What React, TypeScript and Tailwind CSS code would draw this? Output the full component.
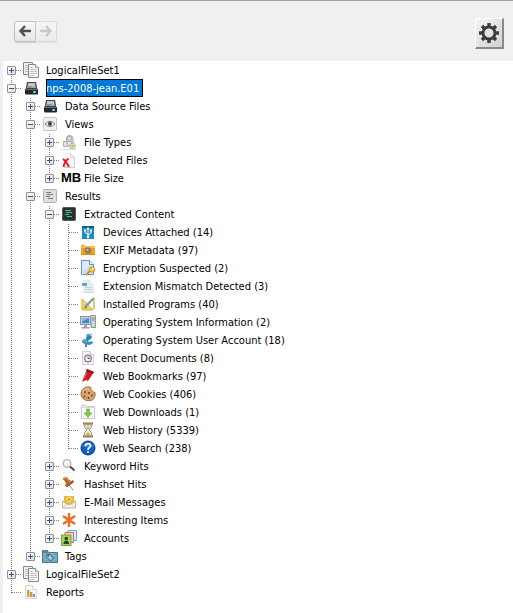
import { useState, type ReactNode } from "react";

type TreeNode = { id: string; label: string; icon: keyof typeof glyphs; children?: TreeNode[]; expandable?: boolean };

const drive = (
  <>
    <path d="M4 2h9l1.500 8h-12z" fill="#3f4245" />
    <path d="M5 3h7l1 5H4z" fill="#a4a8ab" />
    <path d="M5.500 3h6l.5 3H5z" fill="#c6c9cb" />
    <path d="M5 7h4" stroke="#7c8083" />
    <path d="M2 9h13v4.500q0 1-1 1H3q-1 0-1-1z" fill="#25282b" />
    <path d="M2.500 9.500h12" stroke="#6a6e72" />
    <path d="M10 11h3v2h-3z" fill="#2fc3cc" />
    <path d="M11 11.500h1v1h-1z" fill="#b8f5f5" />
  </>
);

const glyphs = {
  fileset: (
    <>
      <path d="M.5.5h9v12H.5z" fill="#f0f0f0" stroke="#868686" />
      <path d="M2 3.500h3M2 5.500h3M2 7.500h3M2 9.500h3" stroke="#bdbdbd" />
      <path d="M5.500 2.500h7l3 3v10h-10z" fill="#f4f4f4" stroke="#868686" />
      <path d="M12.500 2.500v3h3" fill="#fff" stroke="#9a9a9a" />
      <path d="M7 5.500h3M7 7.500h7M7 9.500h7M7 11.500h7M7 13.500h4" stroke="#c4c4c4" />
    </>
  ),
  drive,
  views: (
    <>
      <rect x="1.500" y="1.500" width="13" height="13" rx="1" fill="#f1f1f1" stroke="#c4c4c4" />
      <path d="M3 8q5-5.500 10 0q-5 5-10 0z" fill="#fff" stroke="#777" />
      <circle cx="8" cy="7.800" r="2.200" fill="#52707c" />
      <circle cx="8" cy="7.800" r="1" fill="#111" />
    </>
  ),
  types: (
    <>
      <path d="M2.500 7.500h5v5h-5z" fill="#e4e4e4" stroke="#b0b0b0" />
      <path d="M5.500 9V4q0-2.500 3-2.500T12 4v5z" fill="#e9ebeb" stroke="#aaa" />
      <circle cx="8.500" cy="4.500" r="2.200" fill="#d3e2da" stroke="#a3aaa6" />
      <path d="M6.500 7.500h4v4h-4z" fill="#eee" stroke="#b5b5b5" />
      <circle cx="11.500" cy="12" r="2.800" fill="#e2ecd6" stroke="#a5b596" />
      <circle cx="11.500" cy="12" r="1.200" fill="#8fbf5c" />
      <path d="M0 15.500h15" stroke="#ddd" />
    </>
  ),
  deleted: (
    <>
      <path d="M2 1h8l4 4v11H2z" fill="#f6f6f6" />
      <path d="M13.500 5v10.500H3" fill="none" stroke="#d0d0d0" />
      <path d="M9.500 1.500l4 4h-4z" fill="#fff" stroke="#d6d6d6" />
      <path d="M2 7q3 2 6 8M7.500 6.500q-4 3-5 8.500" fill="none" stroke="#ef1515" strokeWidth="1.900" />
    </>
  ),
  size: null,
  results: (
    <>
      <rect x="1.500" y="1.500" width="13" height="13" rx="1" fill="#dedede" stroke="#b0b0b0" />
      <path d="M4 4.500h5M5 6.500h6M4 8.500h4M6 10.500h5" stroke="#777" />
    </>
  ),
  extracted: (
    <>
      <rect x="1.500" y="1.500" width="13" height="13" rx="1" fill="#2c302f" stroke="#555" />
      <path d="M4 4.500h6M5 6.500h6M4 8.500h4M6 10.500h5" stroke="#35c98d" />
    </>
  ),
  usb: (
    <>
      <rect x="2" y="2" width="12" height="13" fill="#218ac4" />
      <path d="M2 2h12v2H2z" fill="#0d5f96" />
      <path d="M8 4v9M8 10.500L5 8.500V6.500M8 11l3-2V7" fill="none" stroke="#fff" />
      <path d="M6.500 5.500L8 3l1.500 2.500z" fill="#fff" />
      <path d="M4 5.500h2v2H4zM10 5.500h2v2h-2z" fill="#fff" />
      <circle cx="8" cy="13" r="1.300" fill="#fff" />
    </>
  ),
  camera: (
    <>
      <path d="M1 3h3l1 1h10v9H1z" fill="#f29f1e" />
      <path d="M1 4h14v2H1z" fill="#ffba42" />
      <path d="M1 12.500h14" stroke="#dc8a12" />
      <circle cx="8" cy="8.500" r="3.300" fill="#b9793a" />
      <circle cx="8" cy="8.500" r="2.300" fill="#5d8498" />
      <circle cx="7.500" cy="8" r="1" fill="#b4d3e2" />
    </>
  ),
  encrypted: (
    <>
      <path d="M1.500.500h8l4 4v10h-12z" fill="#dcebfa" stroke="#5991d5" />
      <path d="M9.500.500v4h4" fill="#fff" stroke="#5991d5" />
      <path d="M3 10.500q4-1 7-5v5l-3 3H3z" fill="#c3dcf5" />
      <path d="M10.500 10.500L6 15" stroke="#d39722" strokeWidth="2.200" />
      <circle cx="12" cy="9.500" r="2.700" fill="#f6ca55" stroke="#c88c22" />
      <circle cx="12.800" cy="8.700" r=".8" fill="#fff" />
    </>
  ),
  mismatch: (
    <>
      <path d="M3 2h7l4 4v8H3z" fill="#eaeef0" />
      <path d="M10 2v4h4" fill="#fff" stroke="#d3dadf" strokeWidth=".7" />
      <path d="M2 5h5v3H2z" fill="#6ba3cc" />
      <path d="M5 9.500h7M5 11.500h7" stroke="#c9d0d4" />
      <path d="M3.500 14.500H14" stroke="#d5d9db" />
    </>
  ),
  programs: (
    <>
      <path d="M2 3v11h11z" fill="#f4dc58" stroke="#cfb237" />
      <path d="M4.500 8.500v3.500H8z" fill="#fff" stroke="#cfb237" strokeWidth=".7" />
      <path d="M14 2L5.500 10.500" stroke="#7d97a8" strokeWidth="2.200" />
      <path d="M14 2.500v11" stroke="#d0b43a" strokeWidth="1.400" />
      <path d="M5.500 10L4 12.500 7 11.500z" fill="#426a83" />
    </>
  ),
  computer: (
    <>
      <rect x=".5" y="2.500" width="10" height="8" fill="#c9ced2" stroke="#8f979e" />
      <path d="M2 4h7v5H2z" fill="#3388d1" />
      <path d="M2 4h7L2 8z" fill="#7dbaf0" />
      <path d="M4 11h3v2H4zM1.500 13h8v1.500h-8z" fill="#9aa3ab" />
      <rect x="11" y="1.500" width="4.500" height="12" fill="#d3d7da" stroke="#949ca3" />
      <path d="M12 4h3M12 6h3" stroke="#76858e" />
      <path d="M12 13h3v1h-3z" fill="#6ab04c" />
    </>
  ),
  account: (
    <>
      <circle cx="8.500" cy="4" r="2.300" fill="#559fc8" />
      <path d="M6 5.500l5-2 1 2-2.500 2.500-3 1.500z" fill="#337fac" />
      <path d="M10 2l2-.500v2z" fill="#6fb4d9" />
      <path d="M2 8l3-1 2 1 2 2 3-1 1 2-3 2-3-.5V15H5v-3L2.500 11z" fill="#3d8dbb" />
      <path d="M3 8.500l3 .5 1 2" fill="none" stroke="#7dbbdb" />
    </>
  ),
  recent: (
    <>
      <path d="M2.500 1.500h8l3 3v10h-11z" fill="#f6f6f6" stroke="#cfcfcf" />
      <path d="M10.500 1.500v3h3" fill="#fff" stroke="#ccc" />
      <circle cx="8" cy="8.500" r="3.300" fill="#f4eef5" stroke="#8b7590" strokeWidth="1.300" />
      <path d="M8 6.500v2h2" fill="none" stroke="#715079" />
    </>
  ),
  bookmark: (
    <>
      <path d="M7 1l7 3-6 9-2-1-4 2z" fill="#c52028" />
      <path d="M7 1l7 3-1.500 2L6 3z" fill="#98161c" />
      <path d="M6.500 5L3.500 11" stroke="#e8585d" strokeWidth="1.200" />
    </>
  ),
  cookie: (
    <>
      <path d="M5 1.500q3-1.500 6 0q-1 2 1 3q1 2 3 2q1 6-4 8q-6 1-9-3Q-1 5 5 1.500z" fill="#d6a56c" stroke="#a5743f" />
      <path d="M5 3q2-1 4 0M3 6q1-2 2-2" stroke="#edc78d" fill="none" />
      <g fill="#6d4826">
        <circle cx="5" cy="6" r="1" />
        <circle cx="9" cy="7" r="1" />
        <circle cx="4.500" cy="10.500" r="1" />
        <circle cx="8.500" cy="12" r="1" />
        <circle cx="12" cy="9.500" r="1" />
      </g>
    </>
  ),
  download: (
    <>
      <path d="M1.500 1.500h5l1 1h7v12h-13z" fill="#f7f7f7" stroke="#c4caca" />
      <path d="M2 3.500h12" stroke="#d2d8d8" />
      <path d="M6.500 5h3v4H12l-4 4.500L4 9h2.500z" fill="#86c441" stroke="#67a832" strokeWidth=".6" />
    </>
  ),
  history: (
    <>
      <path d="M4 3q0 3 3 5-3 2-3 6h8q0-4-3-6 3-2 3-5z" fill="#f4f0df" stroke="#a29b85" />
      <path d="M5.500 5h5L8 7.500zM8 10l3 3.500H5z" fill="#c8ad61" />
      <path d="M3 1.500h10M3 14.500h10" stroke="#877448" strokeWidth="1.900" />
      <path d="M4 1h8M4 14h8" stroke="#cbb984" strokeWidth=".7" />
    </>
  ),
  search: (
    <>
      <circle cx="8" cy="8" r="7" fill="#155fc3" stroke="#093b91" />
      <path d="M2.500 6Q8-1 13.500 6q-5 3-11 0z" fill="#5b9de8" opacity=".6" />
      <path d="M5.500 6q0-2.500 2.500-2.500T10.500 6q0 1-1.300 1.700Q8 8.500 8 10" fill="none" stroke="#fff" strokeWidth="1.700" />
      <circle cx="8" cy="12" r="1" fill="#fff" />
    </>
  ),
  keyword: (
    <>
      <path d="M9 8.500l4 3.500" stroke="#444" strokeWidth="1.800" strokeLinecap="round" />
      <circle cx="6" cy="5.500" r="3.800" fill="#eff4f6" stroke="#b3b3b3" strokeWidth="1.300" />
      <path d="M4.500 5q.500-2 2.500-2" fill="none" stroke="#fff" />
      <path d="M1 14.500h12" stroke="#eee" />
    </>
  ),
  pin: (
    <>
      <path d="M8 9l4 5" stroke="#888" />
      <path d="M2 2l4-1 1 2 3 2 2-1 1 2-7 5-2-1 1-3-2-3-1-.5z" fill="#b6612f" />
      <path d="M2.500 2.500L6 2l1 3 3 1" fill="none" stroke="#d68a55" />
      <path d="M6 10.500l6.500-4.500" stroke="#8e4a24" />
      <path d="M1 14.500h12" stroke="#eee" />
    </>
  ),
  mail: (
    <>
      <path d="M1 7l7-4 7 4v7H1z" fill="#ddd6b9" />
      <path d="M3 2h10v8H3z" fill="#e9bb3c" />
      <circle cx="8" cy="5.500" r="2.200" fill="none" stroke="#f9e08b" />
      <circle cx="8" cy="5.500" r=".8" fill="#c38a21" />
      <path d="M1.500 7.500l6.500 3.500 6.500-3.500v6.500h-13z" fill="#f7f4e8" stroke="#bcb8a5" />
      <path d="M2 13.500l4-3.500M14 13.500l-4-3.500" stroke="#d3ceba" />
    </>
  ),
  star: <path d="M8 1v14M2 4l12 8M14 4l-12 8" fill="none" stroke="#ee6b20" strokeWidth="2.400" />,
  accounts: (
    <>
      <path d="M7 .5h8.500v10H7z" fill="#d8edf9" stroke="#5fb0de" />
      <path d="M4 2.500h8.500v10H4z" fill="#f9d5cf" stroke="#e06159" />
      <path d="M.5 5h9.500v10.500H.5z" fill="#a4d35d" stroke="#6aa83a" />
      <circle cx="5.300" cy="8.500" r="1.800" fill="#29461f" />
      <path d="M2.500 14q0-3.500 2.800-3.500T8 14z" fill="#29461f" />
    </>
  ),
  tags: (
    <>
      <path d="M.5 2.500h5l1 2h9v10H.5z" fill="#57859f" stroke="#4b7790" />
      <path d="M1 5h14v9H1z" fill="#7ba9c1" />
      <path d="M5 6.500h3l3.500 3.500-3 3L5 9.500z" fill="#a5cce0" stroke="#345b73" />
      <circle cx="6.500" cy="8" r=".7" fill="#274d65" />
    </>
  ),
  reports: (
    <>
      <path d="M2.500 1.500h7l4 4v9h-11z" fill="#fbfbfb" stroke="#d6d6d6" />
      <path d="M9.500 1.500v4h4" fill="#fff" stroke="#d0d0d0" />
      <path d="M4 6h2.500v7H4z" fill="#8cc152" />
      <path d="M7 8h2.500v5H7z" fill="#f18c32" />
      <path d="M10 10h2v3h-2z" fill="#56a3d6" />
    </>
  ),
};

const leaf = (id: string, label: string, icon: TreeNode["icon"]): TreeNode => ({ id, label, icon });
const branch = (id: string, label: string, icon: TreeNode["icon"], children?: TreeNode[]): TreeNode => ({
  id,
  label,
  icon,
  children,
  expandable: true,
});

const tree: TreeNode[] = [
  branch("set1", "LogicalFileSet1", "fileset"),
  branch("jean", "nps-2008-jean.E01", "drive", [
    branch("sources", "Data Source Files", "drive"),
    branch("views", "Views", "views", [
      branch("types", "File Types", "types"),
      branch("deleted", "Deleted Files", "deleted"),
      branch("size", "File Size", "size"),
    ]),
    branch("results", "Results", "results", [
      branch("extracted", "Extracted Content", "extracted", [
        leaf("devices", "Devices Attached (14)", "usb"),
        leaf("exif", "EXIF Metadata (97)", "camera"),
        leaf("encryption", "Encryption Suspected (2)", "encrypted"),
        leaf("mismatch", "Extension Mismatch Detected (3)", "mismatch"),
        leaf("programs", "Installed Programs (40)", "programs"),
        leaf("osinfo", "Operating System Information (2)", "computer"),
        leaf("osuser", "Operating System User Account (18)", "account"),
        leaf("recent", "Recent Documents (8)", "recent"),
        leaf("bookmarks", "Web Bookmarks (97)", "bookmark"),
        leaf("cookies", "Web Cookies (406)", "cookie"),
        leaf("downloads", "Web Downloads (1)", "download"),
        leaf("history", "Web History (5339)", "history"),
        leaf("search", "Web Search (238)", "search"),
      ]),
      branch("keyword", "Keyword Hits", "keyword"),
      branch("hashset", "Hashset Hits", "pin"),
      branch("email", "E-Mail Messages", "mail"),
      branch("interesting", "Interesting Items", "star"),
      branch("accounts", "Accounts", "accounts"),
    ]),
    branch("tags", "Tags", "tags"),
  ]),
  branch("set2", "LogicalFileSet2", "fileset"),
  leaf("reports", "Reports", "reports"),
];

const DOTS_DOWN = "w-px bg-[repeating-linear-gradient(to_bottom,transparent_0_1px,#808080_1px_2px)]";
const DOTS_ACROSS = "h-px bg-[repeating-linear-gradient(to_right,#808080_0_1px,transparent_1px_2px)]";

type Row = { node: TreeNode; guides: boolean[]; first: boolean; last: boolean };

function flatten(nodes: TreeNode[], open: Set<string>, guides: boolean[] = []): Row[] {
  return nodes.flatMap((node, i) => {
    const last = i === nodes.length - 1;
    const row = { node, guides, first: i === 0 && guides.length === 0, last };
    const below = node.children && open.has(node.id) ? flatten(node.children, open, [...guides, !last]) : [];
    return [row, ...below];
  });
}

function Connector({ row, children }: { row: Row; children?: ReactNode }) {
  return (
    <span className="relative flex w-[19px] shrink-0 pl-2">
      <span className="flex flex-col">
        <span className={`h-[10px] ${row.first ? "" : DOTS_DOWN}`} />
        <span className={`grow ${row.last ? "" : DOTS_DOWN}`} />
      </span>
      <span className={`mt-[9px] grow ${DOTS_ACROSS}`} />
      {children}
    </span>
  );
}

export default function App() {
  const [open, setOpen] = useState(new Set(["jean", "views", "results", "extracted"]));
  const [selected, setSelected] = useState("jean");

  const toggle = (id: string) =>
    setOpen((prev) => {
      const next = new Set(prev);
      if (!next.delete(id)) next.add(id);
      return next;
    });

  return (
    <div className="flex min-h-screen flex-col bg-[#f0f0f0] font-['DejaVu_Sans_Condensed','DejaVu_Sans',sans-serif] text-[11px] leading-4 text-black">
      <header className="flex h-[61px] items-center justify-between border-t border-[#a0a0a0] pt-1 pr-[9px] pl-[14px]">
        <nav className="flex pb-1">
          <button
            aria-label="Back"
            className="flex h-[21px] w-[22px] items-center justify-center rounded-l-[3px] border border-[#c0c0c0] bg-linear-to-b from-[#fafafa] to-[#e6e6e6] shadow-[0_1px_1px_#d0d0d0]"
          >
            <svg viewBox="0 0 14 14" className="size-[14px]" fill="none" stroke="#505050" strokeWidth="2.500">
              <path d="M7 2L2.500 7 7 12M3 7h10" />
            </svg>
          </button>
          <button
            aria-label="Forward"
            disabled
            className="flex h-[21px] w-[21px] items-center justify-center rounded-r-[3px] border border-l-0 border-[#dadada] bg-linear-to-b from-[#f6f6f6] to-[#ebebeb] shadow-[0_1px_1px_#e0e0e0]"
          >
            <svg viewBox="0 0 14 14" className="size-[14px]" fill="none" stroke="#c8c8c8" strokeWidth="2.500">
              <path d="M7 2l4.500 5L7 12M11 7H1" />
            </svg>
          </button>
        </nav>
        <button
          aria-label="Settings"
          className="flex h-[31px] w-[29px] items-center justify-center border-t border-r-2 border-b-2 border-l border-t-white border-r-[#8a8a8a] border-b-[#8a8a8a] border-l-white bg-linear-to-br from-[#f4f4f4] to-[#d2d2d2]"
        >
          <svg viewBox="0 0 20 20" className="size-5" fill="none" stroke="#3c3c3c">
            <circle cx="10" cy="10" r="6" strokeWidth="2.800" />
            <path
              d="M10 0v4M10 16v4M0 10h4M16 10h4M3 3l3 3M14 14l3 3M17 3l-3 3M6 14l-3 3"
              strokeWidth="3.400"
            />
          </svg>
        </button>
      </header>
      <main className="ml-[3px] grow bg-white">
        <ul role="tree" aria-label="Case contents">
          {flatten(tree, open).map((row) => {
            const { node } = row;
            const isOpen = open.has(node.id);
            const isSelected = selected === node.id;
            return (
              <li
                key={node.id}
                role="treeitem"
                aria-level={row.guides.length + 1}
                aria-selected={isSelected}
                aria-expanded={node.expandable ? isOpen : undefined}
                className="flex h-[18px] whitespace-nowrap"
              >
                {row.guides.map((line, i) => (
                  <span key={i} className="flex w-[19px] shrink-0 pl-2">
                    {line && <span className={DOTS_DOWN} />}
                  </span>
                ))}
                <Connector row={row}>
                  {node.expandable && (
                    <button
                      aria-label={`${isOpen ? "Collapse" : "Expand"} ${node.label}`}
                      onClick={() => toggle(node.id)}
                      className="absolute top-[5px] left-1 size-[9px] rounded-[1px] border border-[#919191] bg-linear-to-br from-white to-[#dedede]"
                    >
                      <svg viewBox="0 0 7 7" className="block size-[7px]" stroke="#2f4f9c">
                        <path d={isOpen ? "M1 3.500h5" : "M1 3.500h5M3.500 1v5"} />
                      </svg>
                    </button>
                  )}
                </Connector>
                <span className="flex w-6 shrink-0 items-center pl-px">
                  {node.icon === "size" ? (
                    <b className="font-['Liberation_Sans',sans-serif] text-[13px]">MB</b>
                  ) : (
                    <svg viewBox="0 0 16 16" className="size-4" fill="none">
                      {glyphs[node.icon]}
                    </svg>
                  )}
                </span>
                <button
                  onClick={() => setSelected(node.id)}
                  className={
                    isSelected
                      ? "bg-[#0078d7] pt-0.5 pr-1 text-white outline-1 -outline-offset-1 outline-black"
                      : "pt-0.5 pr-1"
                  }
                >
                  {node.label}
                </button>
              </li>
            );
          })}
        </ul>
      </main>
    </div>
  );
}
